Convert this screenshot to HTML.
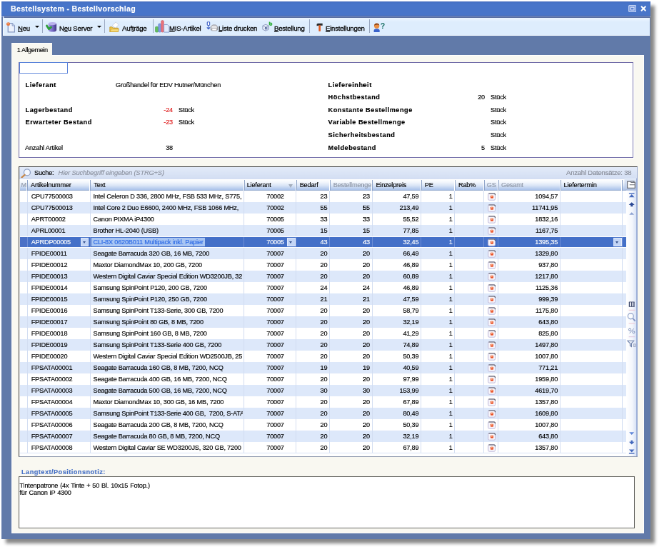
<!DOCTYPE html>
<html lang="de"><head><meta charset="utf-8"><title>Bestellsystem - Bestellvorschlag</title>
<style>
html,body{margin:0;padding:0;background:#fff;overflow:hidden}
body{width:659px;height:548px;position:relative;font-family:"Liberation Sans",sans-serif;font-size:9.2px;letter-spacing:-.2px;color:#000;-webkit-text-stroke:.15px}
#s{position:absolute;left:0;top:0;width:923px;height:768px;transform:scale(.714);transform-origin:0 0;will-change:transform}
#s div,#s span,#s i,#s b,#s svg{position:absolute;box-sizing:border-box;white-space:nowrap}
#s b.hl,#s u,#s em{position:static}
#win{left:2px;top:2px;width:909px;height:753px;background:#617aa9;box-shadow:5.7px 5.7px 4.6px rgba(0,0,0,.47)}
#title{left:2px;top:2px;width:909px;height:21.8px;background:linear-gradient(#3d64b6 0,#4672c6 1.6px,#4875c9 3px,#4875c9 18.6px,#4068b8 20px,#7c96d2 20.6px,#7c96d2 21.8px);color:#fff;font-weight:bold;line-height:21px;font-size:10.6px;letter-spacing:.3px}
#title span{left:13px;top:0}
#tb{left:3.8px;top:23px;width:906.6px;box-shadow:inset 1.4px -1px 0 #f0f7ff;height:27.2px;background:linear-gradient(#5b70a2 0,#5b70a2 1.9px,#eaf5ff 2.4px,#e6f2ff 5px,#deedfd 8px,#deedfd 100%)}
#tb span{top:2.6px;line-height:27px;color:#000;font-size:9.55px;-webkit-text-stroke:.28px}
#tb i.sep{top:4px;width:1px;height:19px;background:#9aa8c0}
#tb i.arr{top:13.4px;margin-left:-.5px;width:0;height:0;border-left:3px solid transparent;border-right:3px solid transparent;border-top:3.3px solid #000}
#tab{left:16px;top:60px;width:57px;height:18.6px;z-index:2;background:#f9f8f1;line-height:17px;border-left:1.2px solid #fff;border-top:1.2px solid #fff;letter-spacing:-.42px}
#tab span{left:6.8px;top:.9px}
#panel{left:16px;top:76.5px;width:886.3px;height:670.3px;background:#f9f8f1;border-right:1.2px solid #fff;border-bottom:1.2px solid #fff;box-shadow:inset 1.2px 1.2px 0 #fff}
#info{left:26px;top:86.5px;width:861px;height:134.2px;background:#fff;border:1.6px solid #716ca8;box-shadow:1.3px 1.3px 0 #fff}
#info span{line-height:14px}
#info .b{font-weight:bold;letter-spacing:.5px;margin-left:.6px}
#info .n{text-align:right;width:40px}
#ed{left:26.8px;top:87.2px;width:68.6px;height:16.2px;border:1.9px solid #5a83da;background:#fff}
#grid{left:25.6px;top:232.6px;width:867.6px;height:407px;background:#fff;border:1.4px solid #9eaed3;border-top-color:#444;border-left-color:#3c3c3c;border-bottom-color:#8e98ad}
#search{left:27px;top:234px;width:865px;height:17.4px;background:linear-gradient(#e3ebf9,#d3def3);line-height:16.4px}
#hdr{left:28px;top:252px;width:848.5px;height:15px;background:linear-gradient(#fdfeff 0%,#f2f6fd 25%,#dbe6f7 55%,#a9c2ea 100%);border-bottom:1px solid #9fb3d4}
#hdr span{top:0;height:15px;line-height:15.4px;padding-left:4.6px;border-right:1.4px solid #8da3c8;box-shadow:inset -1px 0 0 #fff;overflow:hidden}
#hdr span.g{color:#8f98a8}
#hdr span.hlief{padding-left:3.7px}
#hdr span.hgs{padding-left:3.2px}
#hdr span.hges{padding-left:3.8px}
#hdr span.hm{padding-left:1.5px}
.flt{left:375.5px;top:5.5px;width:0;height:0;border-left:3.2px solid transparent;border-right:3.2px solid transparent;border-top:5px solid #a3adbd}
.r{left:28px;width:849px;height:16px;background:#fff}
.r.alt{background:#dde8fa}
.r.sel{background:#4470c8;color:#fff;height:14.6px;margin-top:.8px;overflow:hidden}
.r.sel .c{top:-.8px}
.r.sel .c.m{background:#4a70c6}
.c{top:0;height:16px;line-height:16px;overflow:hidden;margin-left:-28px;border-right:1px solid #d3def2}
.r.sel .c{border-right-color:#6f8fd6}
.c.art{padding-left:5.2px}
.c.txt{padding-left:3.7px;border-right:none;margin-right:0}
.c.lief{text-align:right;padding-right:16.3px;border-left:1px solid #d3def2}
.r.sel .c.lief{border-left-color:#6f8fd6}
.c.bed,.c.bm,.c.ep,.c.pe,.c.ges{text-align:right;padding-right:2.8px}
.hl{font-weight:normal;background:#a9c6f3;color:#2c6ae6;display:inline-block;height:12.6px;line-height:13px;margin-top:1.4px;margin-left:-2.2px;padding-left:2.2px;padding-right:2px}
.pdf{left:4.3px;top:3.6px;width:11.2px;height:10.9px}
.dd{top:.9px;width:11.4px;height:12.6px;background:#c3d5f6;border:1px solid #e2ebfd}
.dd:after{content:"";position:absolute;left:2px;top:4px;border-left:2.8px solid transparent;border-right:2.8px solid transparent;border-top:3px solid #34508c}
#nav{display:none}
#lbl{left:30px;top:654px;color:#4670c6;font-weight:bold;line-height:14px;letter-spacing:.46px}
#ta{left:26.3px;top:667px;width:863.2px;height:73.2px;background:#fff;border:1.4px solid #62625e;line-height:10.3px;padding:6.8px 0 0 .2px;word-spacing:.6px}

</style></head><body>
<div id="s">
<div id="win"></div>
<div id="title"><span>Bestellsystem - Bestellvorschlag</span>
<svg style="left:877.6px;top:4.6px;width:11.4px;height:10.2px" viewBox="0 0 11.4 10.2"><rect x="0.7" y="0.7" width="10" height="8.8" rx="1" fill="#7596de" stroke="#c6d5f3" stroke-width="1.2"/><rect x="3.4" y="3.2" width="4.6" height="3.8" fill="#5d82d2" stroke="#e4ecfb" stroke-width="1"/></svg>
<svg style="left:894.6px;top:5.8px;width:8.4px;height:8px" viewBox="0 0 8.4 8"><path d="M1 0.8L7.4 7.2M7.4 0.8L1 7.2" stroke="#fff" stroke-width="2"/></svg>
</div>
<div id="tb">
<span style="left:21.2px"><u>N</u>eu</span><i class="arr" style="left:45.8px"></i><i class="sep" style="left:55.2px"></i>
<span style="left:79.2px">N<u>e</u>u Server</span><i class="arr" style="left:133px"></i><i class="sep" style="left:142.2px"></i>
<span style="left:167.2px">Auf<u>t</u>räge</span><i class="sep" style="left:210.2px"></i>
<span style="left:233.2px"><u>M</u>IS-Artikel</span>
<span style="left:302.2px"><u>L</u>iste drucken</span>
<span style="left:380.2px"><u>B</u>estellung</span><i class="sep" style="left:429.2px"></i>
<span style="left:452.2px"><u>E</u>instellungen</span><i class="sep" style="left:513.2px"></i>
</div>
<div id="tab"><span>1 Allgemein</span></div>
<div id="panel"></div>
<div id="info">
<span class="b" style="left:8px;top:24px">Lieferant</span>
<span style="left:135px;top:24px">Großhandel für EDV Hutner/München</span>
<span class="b" style="left:8px;top:59px">Lagerbestand</span>
<span class="n" style="left:175px;top:59px;color:#e02020">-24</span><span style="left:223px;top:59px">Stück</span>
<span class="b" style="left:8px;top:76.5px">Erwarteter Bestand</span>
<span class="n" style="left:175px;top:76.5px;color:#e02020">-23</span><span style="left:223px;top:76.5px">Stück</span>
<span style="left:8px;top:112px">Anzahl Artikel</span>
<span class="n" style="left:175px;top:112px">38</span>
<span class="b" style="left:432px;top:24px">Liefereinheit</span>
<span class="b" style="left:432px;top:41.5px">Höchstbestand</span><span class="n" style="left:612px;top:41.5px">20</span><span style="left:660px;top:41.5px">Stück</span>
<span class="b" style="left:432px;top:59px">Konstante Bestellmenge</span><span style="left:660px;top:59px">Stück</span>
<span class="b" style="left:432px;top:76.5px">Variable Bestellmenge</span><span style="left:660px;top:76.5px">Stück</span>
<span class="b" style="left:432px;top:94.5px">Sicherheitsbestand</span><span style="left:660px;top:94.5px">Stück</span>
<span class="b" style="left:432px;top:112px">Meldebestand</span><span class="n" style="left:612px;top:112px">5</span><span style="left:660px;top:112px">Stück</span>
</div>
<div id="ed"></div>
<div id="grid"></div>
<div id="search"><span style="left:21px;top:0">Suche:</span><span style="left:54.6px;top:0;color:#8f95a3;font-style:italic;font-size:9.4px">Hier Suchbegriff eingeben (STRG+S)</span><span style="right:7.6px;top:0;color:#878c98;font-size:9.5px">Anzahl Datensätze: 38</span></div>
<div id="hdr">
<span class="g hm" style="left:0.00px;width:11.20px">M</span>
<span class="hart" style="left:10.50px;width:88.95px">Artikelnummer</span>
<span class="htxt" style="left:98.75px;width:215.95px">Text</span>
<span class="hlief" style="left:314.00px;width:73.80px">Lieferant</span>
<span class="hbed" style="left:387.10px;width:47.80px">Bedarf</span>
<span class="g hbm" style="left:434.20px;width:60.30px">Bestellmenge</span>
<span class="hep" style="left:493.80px;width:69.10px">Einzelpreis</span>
<span class="hpe" style="left:562.20px;width:47.90px">PE</span>
<span class="hrab" style="left:609.40px;width:41.80px">Rab%</span>
<span class="g hgs" style="left:650.50px;width:20.40px">GS</span>
<span class="g hges" style="left:670.20px;width:87.40px">Gesamt</span>
<span class="hlt" style="left:756.90px;width:87.60px">Liefertermin</span>
<i class="flt"></i></div>
<div id="nav"></div>
<div class="r" style="top:266.9px"><span class="c m" style="left:28.0px;width:10.5px"></span><span class="c art" style="left:38.5px;width:88.2px">CPU77500003</span><span class="c txt" style="left:126.8px;width:212.8px">Intel Celeron D 336, 2800 MHz, FSB 533 MHz, S775,</span><span class="c lief" style="left:341.0px;width:74.1px">70002</span><span class="c bed" style="left:415.1px;width:47.1px">23</span><span class="c bm" style="left:462.2px;width:59.6px">23</span><span class="c ep" style="left:521.8px;width:68.4px">47,59</span><span class="c pe" style="left:590.2px;width:47.2px">1</span><span class="c rab" style="left:637.4px;width:41.1px"></span><span class="c gs" style="left:678.5px;width:19.7px"><svg class="pdf" viewBox="0 0 8 7.8"><rect x=".5" y=".6" width="7" height="6.7" rx="1.1" fill="#f8f6fb" stroke="#bdb8da" stroke-width=".7"/><path d="M1 .7H6.6Q7.5 .7 7.5 2.4" fill="none" stroke="#55555e" stroke-width=".85"/><rect x="2.8" y="2.7" width="2.9" height="2.8" rx=".5" fill="#e9532b"/><rect x="3.6" y="2.7" width="1.2" height="1.5" fill="#f9b08a"/></svg></span><span class="c ges" style="left:698.2px;width:86.7px">1094,57</span><span class="c lt" style="left:784.9px;width:86.9px"></span></div>
<div class="r alt" style="top:282.9px"><span class="c m" style="left:28.0px;width:10.5px"></span><span class="c art" style="left:38.5px;width:88.2px">CPU77500013</span><span class="c txt" style="left:126.8px;width:212.8px">Intel Core 2 Duo E6600, 2400 MHz, FSB 1066 MHz,</span><span class="c lief" style="left:341.0px;width:74.1px">70002</span><span class="c bed" style="left:415.1px;width:47.1px">55</span><span class="c bm" style="left:462.2px;width:59.6px">55</span><span class="c ep" style="left:521.8px;width:68.4px">213,49</span><span class="c pe" style="left:590.2px;width:47.2px">1</span><span class="c rab" style="left:637.4px;width:41.1px"></span><span class="c gs" style="left:678.5px;width:19.7px"><svg class="pdf" viewBox="0 0 8 7.8"><rect x=".5" y=".6" width="7" height="6.7" rx="1.1" fill="#f8f6fb" stroke="#bdb8da" stroke-width=".7"/><path d="M1 .7H6.6Q7.5 .7 7.5 2.4" fill="none" stroke="#55555e" stroke-width=".85"/><rect x="2.8" y="2.7" width="2.9" height="2.8" rx=".5" fill="#e9532b"/><rect x="3.6" y="2.7" width="1.2" height="1.5" fill="#f9b08a"/></svg></span><span class="c ges" style="left:698.2px;width:86.7px">11741,95</span><span class="c lt" style="left:784.9px;width:86.9px"></span></div>
<div class="r" style="top:298.9px"><span class="c m" style="left:28.0px;width:10.5px"></span><span class="c art" style="left:38.5px;width:88.2px">APRT00002</span><span class="c txt" style="left:126.8px;width:212.8px">Canon PIXMA iP4300</span><span class="c lief" style="left:341.0px;width:74.1px">70005</span><span class="c bed" style="left:415.1px;width:47.1px">33</span><span class="c bm" style="left:462.2px;width:59.6px">33</span><span class="c ep" style="left:521.8px;width:68.4px">55,52</span><span class="c pe" style="left:590.2px;width:47.2px">1</span><span class="c rab" style="left:637.4px;width:41.1px"></span><span class="c gs" style="left:678.5px;width:19.7px"><svg class="pdf" viewBox="0 0 8 7.8"><rect x=".5" y=".6" width="7" height="6.7" rx="1.1" fill="#f8f6fb" stroke="#bdb8da" stroke-width=".7"/><path d="M1 .7H6.6Q7.5 .7 7.5 2.4" fill="none" stroke="#55555e" stroke-width=".85"/><rect x="2.8" y="2.7" width="2.9" height="2.8" rx=".5" fill="#e9532b"/><rect x="3.6" y="2.7" width="1.2" height="1.5" fill="#f9b08a"/></svg></span><span class="c ges" style="left:698.2px;width:86.7px">1832,16</span><span class="c lt" style="left:784.9px;width:86.9px"></span></div>
<div class="r alt" style="top:314.9px"><span class="c m" style="left:28.0px;width:10.5px"></span><span class="c art" style="left:38.5px;width:88.2px">APRL00001</span><span class="c txt" style="left:126.8px;width:212.8px">Brother HL-2040 (USB)</span><span class="c lief" style="left:341.0px;width:74.1px">70005</span><span class="c bed" style="left:415.1px;width:47.1px">15</span><span class="c bm" style="left:462.2px;width:59.6px">15</span><span class="c ep" style="left:521.8px;width:68.4px">77,85</span><span class="c pe" style="left:590.2px;width:47.2px">1</span><span class="c rab" style="left:637.4px;width:41.1px"></span><span class="c gs" style="left:678.5px;width:19.7px"><svg class="pdf" viewBox="0 0 8 7.8"><rect x=".5" y=".6" width="7" height="6.7" rx="1.1" fill="#f8f6fb" stroke="#bdb8da" stroke-width=".7"/><path d="M1 .7H6.6Q7.5 .7 7.5 2.4" fill="none" stroke="#55555e" stroke-width=".85"/><rect x="2.8" y="2.7" width="2.9" height="2.8" rx=".5" fill="#e9532b"/><rect x="3.6" y="2.7" width="1.2" height="1.5" fill="#f9b08a"/></svg></span><span class="c ges" style="left:698.2px;width:86.7px">1167,75</span><span class="c lt" style="left:784.9px;width:86.9px"></span></div>
<div class="r sel" style="top:330.9px"><span class="c m" style="left:28.0px;width:10.5px"></span><span class="c art" style="left:38.5px;width:88.2px">APRDP00005</span><span class="c txt" style="left:126.8px;width:212.8px"><b class="hl">CLI-8X 0620B011 Multipack inkl. Papier</b></span><span class="c lief" style="left:341.0px;width:74.1px">70005</span><span class="c bed" style="left:415.1px;width:47.1px">43</span><span class="c bm" style="left:462.2px;width:59.6px">43</span><span class="c ep" style="left:521.8px;width:68.4px">32,45</span><span class="c pe" style="left:590.2px;width:47.2px">1</span><span class="c rab" style="left:637.4px;width:41.1px"></span><span class="c gs" style="left:678.5px;width:19.7px"><svg class="pdf" viewBox="0 0 8 7.8"><rect x=".5" y=".6" width="7" height="6.7" rx="1.1" fill="#f8f6fb" stroke="#bdb8da" stroke-width=".7"/><path d="M1 .7H6.6Q7.5 .7 7.5 2.4" fill="none" stroke="#55555e" stroke-width=".85"/><rect x="2.8" y="2.7" width="2.9" height="2.8" rx=".5" fill="#e9532b"/><rect x="3.6" y="2.7" width="1.2" height="1.5" fill="#f9b08a"/></svg></span><span class="c ges" style="left:698.2px;width:86.7px">1395,35</span><span class="c lt" style="left:784.9px;width:86.9px"></span><i class="dd" style="left:85px"></i><i class="dd" style="left:374.4px"></i><i class="dd" style="left:831.3px"></i></div>
<div class="r alt" style="top:346.9px"><span class="c m" style="left:28.0px;width:10.5px"></span><span class="c art" style="left:38.5px;width:88.2px">FPIDE00011</span><span class="c txt" style="left:126.8px;width:212.8px">Seagate Barracuda 320 GB, 16 MB, 7200</span><span class="c lief" style="left:341.0px;width:74.1px">70007</span><span class="c bed" style="left:415.1px;width:47.1px">20</span><span class="c bm" style="left:462.2px;width:59.6px">20</span><span class="c ep" style="left:521.8px;width:68.4px">66,49</span><span class="c pe" style="left:590.2px;width:47.2px">1</span><span class="c rab" style="left:637.4px;width:41.1px"></span><span class="c gs" style="left:678.5px;width:19.7px"><svg class="pdf" viewBox="0 0 8 7.8"><rect x=".5" y=".6" width="7" height="6.7" rx="1.1" fill="#f8f6fb" stroke="#bdb8da" stroke-width=".7"/><path d="M1 .7H6.6Q7.5 .7 7.5 2.4" fill="none" stroke="#55555e" stroke-width=".85"/><rect x="2.8" y="2.7" width="2.9" height="2.8" rx=".5" fill="#e9532b"/><rect x="3.6" y="2.7" width="1.2" height="1.5" fill="#f9b08a"/></svg></span><span class="c ges" style="left:698.2px;width:86.7px">1329,80</span><span class="c lt" style="left:784.9px;width:86.9px"></span></div>
<div class="r" style="top:362.9px"><span class="c m" style="left:28.0px;width:10.5px"></span><span class="c art" style="left:38.5px;width:88.2px">FPIDE00012</span><span class="c txt" style="left:126.8px;width:212.8px">Maxtor DiamondMax 10, 200 GB, 7200</span><span class="c lief" style="left:341.0px;width:74.1px">70007</span><span class="c bed" style="left:415.1px;width:47.1px">20</span><span class="c bm" style="left:462.2px;width:59.6px">20</span><span class="c ep" style="left:521.8px;width:68.4px">46,89</span><span class="c pe" style="left:590.2px;width:47.2px">1</span><span class="c rab" style="left:637.4px;width:41.1px"></span><span class="c gs" style="left:678.5px;width:19.7px"><svg class="pdf" viewBox="0 0 8 7.8"><rect x=".5" y=".6" width="7" height="6.7" rx="1.1" fill="#f8f6fb" stroke="#bdb8da" stroke-width=".7"/><path d="M1 .7H6.6Q7.5 .7 7.5 2.4" fill="none" stroke="#55555e" stroke-width=".85"/><rect x="2.8" y="2.7" width="2.9" height="2.8" rx=".5" fill="#e9532b"/><rect x="3.6" y="2.7" width="1.2" height="1.5" fill="#f9b08a"/></svg></span><span class="c ges" style="left:698.2px;width:86.7px">937,80</span><span class="c lt" style="left:784.9px;width:86.9px"></span></div>
<div class="r alt" style="top:378.9px"><span class="c m" style="left:28.0px;width:10.5px"></span><span class="c art" style="left:38.5px;width:88.2px">FPIDE00013</span><span class="c txt" style="left:126.8px;width:212.8px">Western Digital Caviar Special Edition WD3200JB, 32</span><span class="c lief" style="left:341.0px;width:74.1px">70007</span><span class="c bed" style="left:415.1px;width:47.1px">20</span><span class="c bm" style="left:462.2px;width:59.6px">20</span><span class="c ep" style="left:521.8px;width:68.4px">60,89</span><span class="c pe" style="left:590.2px;width:47.2px">1</span><span class="c rab" style="left:637.4px;width:41.1px"></span><span class="c gs" style="left:678.5px;width:19.7px"><svg class="pdf" viewBox="0 0 8 7.8"><rect x=".5" y=".6" width="7" height="6.7" rx="1.1" fill="#f8f6fb" stroke="#bdb8da" stroke-width=".7"/><path d="M1 .7H6.6Q7.5 .7 7.5 2.4" fill="none" stroke="#55555e" stroke-width=".85"/><rect x="2.8" y="2.7" width="2.9" height="2.8" rx=".5" fill="#e9532b"/><rect x="3.6" y="2.7" width="1.2" height="1.5" fill="#f9b08a"/></svg></span><span class="c ges" style="left:698.2px;width:86.7px">1217,80</span><span class="c lt" style="left:784.9px;width:86.9px"></span></div>
<div class="r" style="top:394.9px"><span class="c m" style="left:28.0px;width:10.5px"></span><span class="c art" style="left:38.5px;width:88.2px">FPIDE00014</span><span class="c txt" style="left:126.8px;width:212.8px">Samsung SpinPoint P120, 200 GB, 7200</span><span class="c lief" style="left:341.0px;width:74.1px">70007</span><span class="c bed" style="left:415.1px;width:47.1px">24</span><span class="c bm" style="left:462.2px;width:59.6px">24</span><span class="c ep" style="left:521.8px;width:68.4px">46,89</span><span class="c pe" style="left:590.2px;width:47.2px">1</span><span class="c rab" style="left:637.4px;width:41.1px"></span><span class="c gs" style="left:678.5px;width:19.7px"><svg class="pdf" viewBox="0 0 8 7.8"><rect x=".5" y=".6" width="7" height="6.7" rx="1.1" fill="#f8f6fb" stroke="#bdb8da" stroke-width=".7"/><path d="M1 .7H6.6Q7.5 .7 7.5 2.4" fill="none" stroke="#55555e" stroke-width=".85"/><rect x="2.8" y="2.7" width="2.9" height="2.8" rx=".5" fill="#e9532b"/><rect x="3.6" y="2.7" width="1.2" height="1.5" fill="#f9b08a"/></svg></span><span class="c ges" style="left:698.2px;width:86.7px">1125,36</span><span class="c lt" style="left:784.9px;width:86.9px"></span></div>
<div class="r alt" style="top:410.9px"><span class="c m" style="left:28.0px;width:10.5px"></span><span class="c art" style="left:38.5px;width:88.2px">FPIDE00015</span><span class="c txt" style="left:126.8px;width:212.8px">Samsung SpinPoint P120, 250 GB, 7200</span><span class="c lief" style="left:341.0px;width:74.1px">70007</span><span class="c bed" style="left:415.1px;width:47.1px">21</span><span class="c bm" style="left:462.2px;width:59.6px">21</span><span class="c ep" style="left:521.8px;width:68.4px">47,59</span><span class="c pe" style="left:590.2px;width:47.2px">1</span><span class="c rab" style="left:637.4px;width:41.1px"></span><span class="c gs" style="left:678.5px;width:19.7px"><svg class="pdf" viewBox="0 0 8 7.8"><rect x=".5" y=".6" width="7" height="6.7" rx="1.1" fill="#f8f6fb" stroke="#bdb8da" stroke-width=".7"/><path d="M1 .7H6.6Q7.5 .7 7.5 2.4" fill="none" stroke="#55555e" stroke-width=".85"/><rect x="2.8" y="2.7" width="2.9" height="2.8" rx=".5" fill="#e9532b"/><rect x="3.6" y="2.7" width="1.2" height="1.5" fill="#f9b08a"/></svg></span><span class="c ges" style="left:698.2px;width:86.7px">999,39</span><span class="c lt" style="left:784.9px;width:86.9px"></span></div>
<div class="r" style="top:426.9px"><span class="c m" style="left:28.0px;width:10.5px"></span><span class="c art" style="left:38.5px;width:88.2px">FPIDE00016</span><span class="c txt" style="left:126.8px;width:212.8px">Samsung SpinPoint T133-Serie, 300 GB, 7200</span><span class="c lief" style="left:341.0px;width:74.1px">70007</span><span class="c bed" style="left:415.1px;width:47.1px">20</span><span class="c bm" style="left:462.2px;width:59.6px">20</span><span class="c ep" style="left:521.8px;width:68.4px">58,79</span><span class="c pe" style="left:590.2px;width:47.2px">1</span><span class="c rab" style="left:637.4px;width:41.1px"></span><span class="c gs" style="left:678.5px;width:19.7px"><svg class="pdf" viewBox="0 0 8 7.8"><rect x=".5" y=".6" width="7" height="6.7" rx="1.1" fill="#f8f6fb" stroke="#bdb8da" stroke-width=".7"/><path d="M1 .7H6.6Q7.5 .7 7.5 2.4" fill="none" stroke="#55555e" stroke-width=".85"/><rect x="2.8" y="2.7" width="2.9" height="2.8" rx=".5" fill="#e9532b"/><rect x="3.6" y="2.7" width="1.2" height="1.5" fill="#f9b08a"/></svg></span><span class="c ges" style="left:698.2px;width:86.7px">1175,80</span><span class="c lt" style="left:784.9px;width:86.9px"></span></div>
<div class="r alt" style="top:442.9px"><span class="c m" style="left:28.0px;width:10.5px"></span><span class="c art" style="left:38.5px;width:88.2px">FPIDE00017</span><span class="c txt" style="left:126.8px;width:212.8px">Samsung SpinPoint 80 GB, 8 MB, 7200</span><span class="c lief" style="left:341.0px;width:74.1px">70007</span><span class="c bed" style="left:415.1px;width:47.1px">20</span><span class="c bm" style="left:462.2px;width:59.6px">20</span><span class="c ep" style="left:521.8px;width:68.4px">32,19</span><span class="c pe" style="left:590.2px;width:47.2px">1</span><span class="c rab" style="left:637.4px;width:41.1px"></span><span class="c gs" style="left:678.5px;width:19.7px"><svg class="pdf" viewBox="0 0 8 7.8"><rect x=".5" y=".6" width="7" height="6.7" rx="1.1" fill="#f8f6fb" stroke="#bdb8da" stroke-width=".7"/><path d="M1 .7H6.6Q7.5 .7 7.5 2.4" fill="none" stroke="#55555e" stroke-width=".85"/><rect x="2.8" y="2.7" width="2.9" height="2.8" rx=".5" fill="#e9532b"/><rect x="3.6" y="2.7" width="1.2" height="1.5" fill="#f9b08a"/></svg></span><span class="c ges" style="left:698.2px;width:86.7px">643,80</span><span class="c lt" style="left:784.9px;width:86.9px"></span></div>
<div class="r" style="top:458.9px"><span class="c m" style="left:28.0px;width:10.5px"></span><span class="c art" style="left:38.5px;width:88.2px">FPIDE00018</span><span class="c txt" style="left:126.8px;width:212.8px">Samsung SpinPoint 160 GB, 8 MB, 7200</span><span class="c lief" style="left:341.0px;width:74.1px">70007</span><span class="c bed" style="left:415.1px;width:47.1px">20</span><span class="c bm" style="left:462.2px;width:59.6px">20</span><span class="c ep" style="left:521.8px;width:68.4px">41,29</span><span class="c pe" style="left:590.2px;width:47.2px">1</span><span class="c rab" style="left:637.4px;width:41.1px"></span><span class="c gs" style="left:678.5px;width:19.7px"><svg class="pdf" viewBox="0 0 8 7.8"><rect x=".5" y=".6" width="7" height="6.7" rx="1.1" fill="#f8f6fb" stroke="#bdb8da" stroke-width=".7"/><path d="M1 .7H6.6Q7.5 .7 7.5 2.4" fill="none" stroke="#55555e" stroke-width=".85"/><rect x="2.8" y="2.7" width="2.9" height="2.8" rx=".5" fill="#e9532b"/><rect x="3.6" y="2.7" width="1.2" height="1.5" fill="#f9b08a"/></svg></span><span class="c ges" style="left:698.2px;width:86.7px">825,80</span><span class="c lt" style="left:784.9px;width:86.9px"></span></div>
<div class="r alt" style="top:474.9px"><span class="c m" style="left:28.0px;width:10.5px"></span><span class="c art" style="left:38.5px;width:88.2px">FPIDE00019</span><span class="c txt" style="left:126.8px;width:212.8px">Samsung SpinPoint T133-Serie 400 GB, 7200</span><span class="c lief" style="left:341.0px;width:74.1px">70007</span><span class="c bed" style="left:415.1px;width:47.1px">20</span><span class="c bm" style="left:462.2px;width:59.6px">20</span><span class="c ep" style="left:521.8px;width:68.4px">74,89</span><span class="c pe" style="left:590.2px;width:47.2px">1</span><span class="c rab" style="left:637.4px;width:41.1px"></span><span class="c gs" style="left:678.5px;width:19.7px"><svg class="pdf" viewBox="0 0 8 7.8"><rect x=".5" y=".6" width="7" height="6.7" rx="1.1" fill="#f8f6fb" stroke="#bdb8da" stroke-width=".7"/><path d="M1 .7H6.6Q7.5 .7 7.5 2.4" fill="none" stroke="#55555e" stroke-width=".85"/><rect x="2.8" y="2.7" width="2.9" height="2.8" rx=".5" fill="#e9532b"/><rect x="3.6" y="2.7" width="1.2" height="1.5" fill="#f9b08a"/></svg></span><span class="c ges" style="left:698.2px;width:86.7px">1497,80</span><span class="c lt" style="left:784.9px;width:86.9px"></span></div>
<div class="r" style="top:490.9px"><span class="c m" style="left:28.0px;width:10.5px"></span><span class="c art" style="left:38.5px;width:88.2px">FPIDE00020</span><span class="c txt" style="left:126.8px;width:212.8px">Western Digital Caviar Special Edition WD2500JB, 25</span><span class="c lief" style="left:341.0px;width:74.1px">70007</span><span class="c bed" style="left:415.1px;width:47.1px">20</span><span class="c bm" style="left:462.2px;width:59.6px">20</span><span class="c ep" style="left:521.8px;width:68.4px">50,39</span><span class="c pe" style="left:590.2px;width:47.2px">1</span><span class="c rab" style="left:637.4px;width:41.1px"></span><span class="c gs" style="left:678.5px;width:19.7px"><svg class="pdf" viewBox="0 0 8 7.8"><rect x=".5" y=".6" width="7" height="6.7" rx="1.1" fill="#f8f6fb" stroke="#bdb8da" stroke-width=".7"/><path d="M1 .7H6.6Q7.5 .7 7.5 2.4" fill="none" stroke="#55555e" stroke-width=".85"/><rect x="2.8" y="2.7" width="2.9" height="2.8" rx=".5" fill="#e9532b"/><rect x="3.6" y="2.7" width="1.2" height="1.5" fill="#f9b08a"/></svg></span><span class="c ges" style="left:698.2px;width:86.7px">1007,80</span><span class="c lt" style="left:784.9px;width:86.9px"></span></div>
<div class="r alt" style="top:506.9px"><span class="c m" style="left:28.0px;width:10.5px"></span><span class="c art" style="left:38.5px;width:88.2px">FPSATA00001</span><span class="c txt" style="left:126.8px;width:212.8px">Seagate Barracuda 160 GB, 8 MB, 7200, NCQ</span><span class="c lief" style="left:341.0px;width:74.1px">70007</span><span class="c bed" style="left:415.1px;width:47.1px">19</span><span class="c bm" style="left:462.2px;width:59.6px">19</span><span class="c ep" style="left:521.8px;width:68.4px">40,59</span><span class="c pe" style="left:590.2px;width:47.2px">1</span><span class="c rab" style="left:637.4px;width:41.1px"></span><span class="c gs" style="left:678.5px;width:19.7px"><svg class="pdf" viewBox="0 0 8 7.8"><rect x=".5" y=".6" width="7" height="6.7" rx="1.1" fill="#f8f6fb" stroke="#bdb8da" stroke-width=".7"/><path d="M1 .7H6.6Q7.5 .7 7.5 2.4" fill="none" stroke="#55555e" stroke-width=".85"/><rect x="2.8" y="2.7" width="2.9" height="2.8" rx=".5" fill="#e9532b"/><rect x="3.6" y="2.7" width="1.2" height="1.5" fill="#f9b08a"/></svg></span><span class="c ges" style="left:698.2px;width:86.7px">771,21</span><span class="c lt" style="left:784.9px;width:86.9px"></span></div>
<div class="r" style="top:522.9px"><span class="c m" style="left:28.0px;width:10.5px"></span><span class="c art" style="left:38.5px;width:88.2px">FPSATA00002</span><span class="c txt" style="left:126.8px;width:212.8px">Seagate Barracuda 400 GB, 16 MB, 7200, NCQ</span><span class="c lief" style="left:341.0px;width:74.1px">70007</span><span class="c bed" style="left:415.1px;width:47.1px">20</span><span class="c bm" style="left:462.2px;width:59.6px">20</span><span class="c ep" style="left:521.8px;width:68.4px">97,99</span><span class="c pe" style="left:590.2px;width:47.2px">1</span><span class="c rab" style="left:637.4px;width:41.1px"></span><span class="c gs" style="left:678.5px;width:19.7px"><svg class="pdf" viewBox="0 0 8 7.8"><rect x=".5" y=".6" width="7" height="6.7" rx="1.1" fill="#f8f6fb" stroke="#bdb8da" stroke-width=".7"/><path d="M1 .7H6.6Q7.5 .7 7.5 2.4" fill="none" stroke="#55555e" stroke-width=".85"/><rect x="2.8" y="2.7" width="2.9" height="2.8" rx=".5" fill="#e9532b"/><rect x="3.6" y="2.7" width="1.2" height="1.5" fill="#f9b08a"/></svg></span><span class="c ges" style="left:698.2px;width:86.7px">1959,80</span><span class="c lt" style="left:784.9px;width:86.9px"></span></div>
<div class="r alt" style="top:538.9px"><span class="c m" style="left:28.0px;width:10.5px"></span><span class="c art" style="left:38.5px;width:88.2px">FPSATA00003</span><span class="c txt" style="left:126.8px;width:212.8px">Seagate Barracuda 500 GB, 16 MB, 7200, NCQ</span><span class="c lief" style="left:341.0px;width:74.1px">70007</span><span class="c bed" style="left:415.1px;width:47.1px">30</span><span class="c bm" style="left:462.2px;width:59.6px">30</span><span class="c ep" style="left:521.8px;width:68.4px">153,99</span><span class="c pe" style="left:590.2px;width:47.2px">1</span><span class="c rab" style="left:637.4px;width:41.1px"></span><span class="c gs" style="left:678.5px;width:19.7px"><svg class="pdf" viewBox="0 0 8 7.8"><rect x=".5" y=".6" width="7" height="6.7" rx="1.1" fill="#f8f6fb" stroke="#bdb8da" stroke-width=".7"/><path d="M1 .7H6.6Q7.5 .7 7.5 2.4" fill="none" stroke="#55555e" stroke-width=".85"/><rect x="2.8" y="2.7" width="2.9" height="2.8" rx=".5" fill="#e9532b"/><rect x="3.6" y="2.7" width="1.2" height="1.5" fill="#f9b08a"/></svg></span><span class="c ges" style="left:698.2px;width:86.7px">4619,70</span><span class="c lt" style="left:784.9px;width:86.9px"></span></div>
<div class="r" style="top:554.9px"><span class="c m" style="left:28.0px;width:10.5px"></span><span class="c art" style="left:38.5px;width:88.2px">FPSATA00004</span><span class="c txt" style="left:126.8px;width:212.8px">Maxtor DiamondMax 10, 300 GB, 16 MB, 7200</span><span class="c lief" style="left:341.0px;width:74.1px">70007</span><span class="c bed" style="left:415.1px;width:47.1px">20</span><span class="c bm" style="left:462.2px;width:59.6px">20</span><span class="c ep" style="left:521.8px;width:68.4px">67,89</span><span class="c pe" style="left:590.2px;width:47.2px">1</span><span class="c rab" style="left:637.4px;width:41.1px"></span><span class="c gs" style="left:678.5px;width:19.7px"><svg class="pdf" viewBox="0 0 8 7.8"><rect x=".5" y=".6" width="7" height="6.7" rx="1.1" fill="#f8f6fb" stroke="#bdb8da" stroke-width=".7"/><path d="M1 .7H6.6Q7.5 .7 7.5 2.4" fill="none" stroke="#55555e" stroke-width=".85"/><rect x="2.8" y="2.7" width="2.9" height="2.8" rx=".5" fill="#e9532b"/><rect x="3.6" y="2.7" width="1.2" height="1.5" fill="#f9b08a"/></svg></span><span class="c ges" style="left:698.2px;width:86.7px">1357,80</span><span class="c lt" style="left:784.9px;width:86.9px"></span></div>
<div class="r alt" style="top:570.9px"><span class="c m" style="left:28.0px;width:10.5px"></span><span class="c art" style="left:38.5px;width:88.2px">FPSATA00005</span><span class="c txt" style="left:126.8px;width:212.8px">Samsung SpinPoint T133-Serie 400 GB, &nbsp;7200, S-ATA</span><span class="c lief" style="left:341.0px;width:74.1px">70007</span><span class="c bed" style="left:415.1px;width:47.1px">20</span><span class="c bm" style="left:462.2px;width:59.6px">20</span><span class="c ep" style="left:521.8px;width:68.4px">80,49</span><span class="c pe" style="left:590.2px;width:47.2px">1</span><span class="c rab" style="left:637.4px;width:41.1px"></span><span class="c gs" style="left:678.5px;width:19.7px"><svg class="pdf" viewBox="0 0 8 7.8"><rect x=".5" y=".6" width="7" height="6.7" rx="1.1" fill="#f8f6fb" stroke="#bdb8da" stroke-width=".7"/><path d="M1 .7H6.6Q7.5 .7 7.5 2.4" fill="none" stroke="#55555e" stroke-width=".85"/><rect x="2.8" y="2.7" width="2.9" height="2.8" rx=".5" fill="#e9532b"/><rect x="3.6" y="2.7" width="1.2" height="1.5" fill="#f9b08a"/></svg></span><span class="c ges" style="left:698.2px;width:86.7px">1609,80</span><span class="c lt" style="left:784.9px;width:86.9px"></span></div>
<div class="r" style="top:586.9px"><span class="c m" style="left:28.0px;width:10.5px"></span><span class="c art" style="left:38.5px;width:88.2px">FPSATA00006</span><span class="c txt" style="left:126.8px;width:212.8px">Seagate Barracuda 200 GB, 8 MB, 7200, NCQ</span><span class="c lief" style="left:341.0px;width:74.1px">70007</span><span class="c bed" style="left:415.1px;width:47.1px">20</span><span class="c bm" style="left:462.2px;width:59.6px">20</span><span class="c ep" style="left:521.8px;width:68.4px">50,39</span><span class="c pe" style="left:590.2px;width:47.2px">1</span><span class="c rab" style="left:637.4px;width:41.1px"></span><span class="c gs" style="left:678.5px;width:19.7px"><svg class="pdf" viewBox="0 0 8 7.8"><rect x=".5" y=".6" width="7" height="6.7" rx="1.1" fill="#f8f6fb" stroke="#bdb8da" stroke-width=".7"/><path d="M1 .7H6.6Q7.5 .7 7.5 2.4" fill="none" stroke="#55555e" stroke-width=".85"/><rect x="2.8" y="2.7" width="2.9" height="2.8" rx=".5" fill="#e9532b"/><rect x="3.6" y="2.7" width="1.2" height="1.5" fill="#f9b08a"/></svg></span><span class="c ges" style="left:698.2px;width:86.7px">1007,80</span><span class="c lt" style="left:784.9px;width:86.9px"></span></div>
<div class="r alt" style="top:602.9px"><span class="c m" style="left:28.0px;width:10.5px"></span><span class="c art" style="left:38.5px;width:88.2px">FPSATA00007</span><span class="c txt" style="left:126.8px;width:212.8px">Seagate Barracuda 80 GB, 8 MB, 7200, NCQ</span><span class="c lief" style="left:341.0px;width:74.1px">70007</span><span class="c bed" style="left:415.1px;width:47.1px">20</span><span class="c bm" style="left:462.2px;width:59.6px">20</span><span class="c ep" style="left:521.8px;width:68.4px">32,19</span><span class="c pe" style="left:590.2px;width:47.2px">1</span><span class="c rab" style="left:637.4px;width:41.1px"></span><span class="c gs" style="left:678.5px;width:19.7px"><svg class="pdf" viewBox="0 0 8 7.8"><rect x=".5" y=".6" width="7" height="6.7" rx="1.1" fill="#f8f6fb" stroke="#bdb8da" stroke-width=".7"/><path d="M1 .7H6.6Q7.5 .7 7.5 2.4" fill="none" stroke="#55555e" stroke-width=".85"/><rect x="2.8" y="2.7" width="2.9" height="2.8" rx=".5" fill="#e9532b"/><rect x="3.6" y="2.7" width="1.2" height="1.5" fill="#f9b08a"/></svg></span><span class="c ges" style="left:698.2px;width:86.7px">643,80</span><span class="c lt" style="left:784.9px;width:86.9px"></span></div>
<div class="r" style="top:618.9px"><span class="c m" style="left:28.0px;width:10.5px"></span><span class="c art" style="left:38.5px;width:88.2px">FPSATA00008</span><span class="c txt" style="left:126.8px;width:212.8px">Western Digital Caviar SE WD3200JS, 320 GB, 7200</span><span class="c lief" style="left:341.0px;width:74.1px">70007</span><span class="c bed" style="left:415.1px;width:47.1px">20</span><span class="c bm" style="left:462.2px;width:59.6px">20</span><span class="c ep" style="left:521.8px;width:68.4px">67,89</span><span class="c pe" style="left:590.2px;width:47.2px">1</span><span class="c rab" style="left:637.4px;width:41.1px"></span><span class="c gs" style="left:678.5px;width:19.7px"><svg class="pdf" viewBox="0 0 8 7.8"><rect x=".5" y=".6" width="7" height="6.7" rx="1.1" fill="#f8f6fb" stroke="#bdb8da" stroke-width=".7"/><path d="M1 .7H6.6Q7.5 .7 7.5 2.4" fill="none" stroke="#55555e" stroke-width=".85"/><rect x="2.8" y="2.7" width="2.9" height="2.8" rx=".5" fill="#e9532b"/><rect x="3.6" y="2.7" width="1.2" height="1.5" fill="#f9b08a"/></svg></span><span class="c ges" style="left:698.2px;width:86.7px">1357,80</span><span class="c lt" style="left:784.9px;width:86.9px"></span></div>
<div class="r" style="top:634.3px;height:1px;background:#dbe6f8"></div>
<div id="lbl">Langtext/Positionsnotiz:</div>
<div id="ta">Tintenpatrone (4x Tinte + 50 Bl. 10x15 Fotop.)<br>für Canon iP 4300</div>
<svg style="left:8.68px;top:31.09px;width:12.18px;height:14.57px" viewBox="0 0 8.70 10.40"><path d="M1.6 1.2H5.8L8.2 3.6V9.9H1.6Z" fill="#edf2fc" stroke="#8497c2" stroke-width=".9"/><path d="M5.8 1.2V3.6H8.2" fill="#cfdaf0" stroke="#8497c2" stroke-width=".6"/><circle cx="1.9" cy="1.9" r="1.7" fill="#e9743a"/><circle cx="1.6" cy="1.5" r=".7" fill="#f8b58a"/></svg>
<svg style="left:64.29px;top:30.39px;width:15.55px;height:15.27px" viewBox="0 0 11.10 10.90"><defs><linearGradient id="gsv" x1="0" x2="1"><stop offset="0" stop-color="#a49be2"/><stop offset=".55" stop-color="#7468c4"/><stop offset="1" stop-color="#40367f"/></linearGradient></defs><path d="M2.6 2.2V8.8A4.1 1.6 0 0 0 10.8 8.8V2.2Z" fill="url(#gsv)"/><ellipse cx="6.7" cy="2.2" rx="4.1" ry="1.5" fill="#b9b2ec"/><path d="M0.6 3.6L3.2 7.6L6 5.2" fill="none" stroke="#2fa03a" stroke-width="2" stroke-linejoin="round"/></svg>
<svg style="left:153.22px;top:29.83px;width:13.87px;height:15.27px" viewBox="0 0 9.90 10.90"><path d="M3.2 3.8L6.6 0.6L9.3 3.4L6 6.8Z" fill="#fff" stroke="#c3cbdb" stroke-width=".6"/><path d="M0.6 5.6H3L4 6.6H8.8V10.3H0.6Z" fill="#f3cb4e" stroke="#c59a2b" stroke-width=".7"/><path d="M0.6 10.3L2 7.6H9.6L8.8 10.3Z" fill="#f8dc7c" stroke="#c59a2b" stroke-width=".5"/></svg>
<svg style="left:217.09px;top:28.43px;width:20.73px;height:17.79px" viewBox="0 0 14.80 12.70"><rect x=".3" y="6.6" width="3" height="5.6" rx="1" fill="#63bd5e" stroke="#3f9a3f" stroke-width=".4"/><rect x="3.4" y="3.6" width="2.7" height="8.6" rx="1" fill="#7f9de2" stroke="#5877c4" stroke-width=".4"/><rect x="6.2" y=".4" width="2.6" height="11.8" rx="1.2" fill="#ea737c" stroke="#c9525c" stroke-width=".4"/><path d="M9 4.6H12.4L14.2 6.4V12.2H9Z" fill="#e2ebfb" stroke="#879ccb" stroke-width=".7"/></svg>
<svg style="left:288.52px;top:29.83px;width:16.11px;height:13.87px" viewBox="0 0 11.50 9.90"><rect x=".9" y=".5" width="2.4" height="3.4" rx=".6" fill="#fff" stroke="#3c60c6" stroke-width=".8"/><path d="M2.1 4.6V7.2M.6 6L2.1 7.6L3.6 6" fill="none" stroke="#3c60c6" stroke-width=".9"/><path d="M4.6 5.2L6.2 3.6H9.6L11 5.2V8.6H4.6Z" fill="#e4e4e6" stroke="#8b8b90" stroke-width=".7"/><rect x="5.6" y="7" width="4.6" height="2.2" fill="#fff" stroke="#9a9aa0" stroke-width=".5"/></svg>
<svg style="left:367.09px;top:30.25px;width:14.71px;height:13.45px" viewBox="0 0 10.50 9.60"><path d="M0.6 4.4L3.6 3L6.8 4.4V8L3.6 9.4L0.6 8Z" fill="#e6ecf8" stroke="#8e9cc0" stroke-width=".7"/><path d="M3.6 5.8L6.8 4.4V8L3.6 9.4Z" fill="#b9c4de"/><path d="M0.6 4.4L3.6 5.8L6.8 4.4M3.6 5.8V9.4" fill="none" stroke="#8e9cc0" stroke-width=".6"/><circle cx="3.8" cy="6.6" r="1" fill="#5b6c9c"/><path d="M7.5 .4V3.5" stroke="#2fae38" stroke-width="1.1" fill="none"/><circle cx="8.7" cy="2.6" r="1.1" fill="none" stroke="#2fae38" stroke-width="1"/></svg>
<svg style="left:443.14px;top:31.65px;width:9.24px;height:12.04px" viewBox="0 0 6.60 8.60"><path d="M0.4 1.2Q1 .4 2.4 .6H6.2V2.6H2.4Q1.2 2.6 .4 3Z" fill="#2b2b2b"/><rect x="2.4" y="2.4" width="1.9" height="6" rx=".6" fill="#e35a1e"/></svg>
<svg style="left:522.55px;top:30.67px;width:16.11px;height:14.01px" viewBox="0 0 11.50 10.00"><path d="M.4 10V8.4Q.4 6.6 3.3 6.6Q6.2 6.6 6.2 8.4V10Z" fill="#3a63cc"/><circle cx="3.3" cy="3.7" r="2.6" fill="#eb8f44"/><path d="M.8 3.4A2.6 2.6 0 0 1 5.9 3.2Q3.8 1.8 .8 3.4Z" fill="#7a3a18"/><text x="6.9" y="6.2" font-family="Liberation Sans,sans-serif" font-size="7.6" font-weight="bold" fill="#1d7368">?</text></svg>
<svg style="left:28.85px;top:235.85px;width:15.13px;height:13.45px" viewBox="0 0 10.80 9.60"><circle cx="6.4" cy="3.9" r="3.2" fill="#f4f8ff" stroke="#8e9fc4" stroke-width=".9"/><path d="M4 6.4L.9 9" stroke="#c98a4a" stroke-width="1.6" stroke-linecap="round"/></svg>
<svg style="left:876.75px;top:249.30px;width:15.41px;height:390.76px;overflow:visible" viewBox="0 0 11 279"><defs><linearGradient id="gnh" x1="0" x2="0" y1="0" y2="1"><stop offset="0" stop-color="#e3ebf8"/><stop offset="1" stop-color="#b3c6e7"/></linearGradient><linearGradient id="gnb" x1="0" x2="1"><stop offset="0" stop-color="#ffffff"/><stop offset=".55" stop-color="#f4f7fd"/><stop offset="1" stop-color="#d5e0f5"/></linearGradient></defs><rect x=".3" y="12.4" width="10.2" height="266" fill="url(#gnb)"/><rect x="-1.8" y=".6" width="12.4" height="11.8" fill="url(#gnh)"/><path d="M-1.8 12.2H10.6" stroke="#9fb3d4" stroke-width=".7"/><path d="M1.2 3.6H4.2L5 4.6H8.8V10.2H1.2Z" fill="#fff" stroke="#6d7079" stroke-width=".9"/><path d="M4.6 3.4H7.8V4.6M3.4 7H8.6" fill="none" stroke="#6d7079" stroke-width=".8"/><path d="M2.8 15.6H8.2" stroke="#4469bd" stroke-width="1"/><path d="M5.5 16.4L8.2 19.4H2.8Z" fill="#4469bd"/><path d="M5.5 24.4L8.4 27.2H6.6V28.8H4.4V27.2H2.6Z" fill="#2c4a96"/><path d="M5.5 34.4L8 37H3Z" fill="#8ea3d2"/><path d="M3.2 124.2V128.8M5.5 124.2V128.8M7.8 124.2V128.8" fill="none" stroke="#434e70" stroke-width="1"/><path d="M2.8 124.2H8.3M2.8 128.8H8.3" fill="none" stroke="#434e70" stroke-width=".6"/><path d="M2.6 132.3H8.8" stroke="#ecc4d0" stroke-width=".7"/><circle cx="4.5" cy="138.4" r="2.8" fill="#fbfdff" stroke="#90a2c9" stroke-width=".9"/><path d="M6.6 140.6L9 143.2" stroke="#8194c0" stroke-width="1.3"/><path d="M2.6 145.6H8.8" stroke="#ecc4d0" stroke-width=".7"/><circle cx="3.6" cy="151.8" r="1.1" fill="none" stroke="#7a8db8" stroke-width=".7"/><circle cx="7.4" cy="154.4" r="1.1" fill="none" stroke="#7a8db8" stroke-width=".7"/><path d="M7.6 150.8L3.4 155.4" stroke="#7a8db8" stroke-width=".7"/><path d="M2.6 159H8.8" stroke="#dcc6de" stroke-width=".7"/><path d="M1.4 163H7.6L5.3 165.6V168.8L3.9 167.9V165.6Z" fill="#eef2fa" stroke="#6b7fa9" stroke-width=".8"/><path d="M7.3 166.2H9.4V168.8H7.3Z" fill="#d2dbec" stroke="#8b97b3" stroke-width=".5"/><path d="M3 254.4H8L5.5 257Z" fill="#5f86d8"/><path d="M5.5 266.6L8.2 264H6.4V262.6H4.6V264H2.8Z" fill="#4469bd"/><path d="M5.5 274.6L8.2 271.6H2.8Z" fill="#4469bd"/><path d="M2.8 275.6H8.2" stroke="#4469bd" stroke-width="1"/><path d="M10.4 .6V278.4" stroke="#9db0da" stroke-width=".8"/></svg>
</div>
</body></html>
